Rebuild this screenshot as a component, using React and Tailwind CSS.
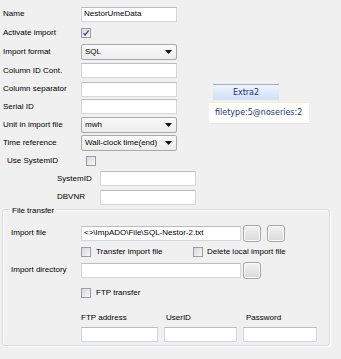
import { useState } from "react";

function TextBox({ value = "", className = "" }) {
  return (
    <div
      className={`h-[15px] bg-white border border-[#d3d7dc] border-t-[#b9bdc3] px-[2px] flex items-center text-[8px] leading-none ${className}`}
    >
      {value}
    </div>
  );
}

function Combo({ value, className = "" }) {
  return (
    <div
      className={`h-[16px] bg-gradient-to-b from-[#fafafa] to-[#ececec] border border-[#a9a9a9] rounded-[2px] pl-[3px] pr-[4px] flex items-center justify-between ${className}`}
    >
      <span>{value}</span>
      <svg width="7" height="4" viewBox="0 0 7 4">
        <path d="M0 0 L7 0 L3.5 4 Z" fill="#111" />
      </svg>
    </div>
  );
}

function Check({ checked }) {
  return (
    <span className="w-[10px] h-[10px] shrink-0 border border-[#9a9da2] bg-gradient-to-br from-[#d6d9de] to-[#f6f7f8] flex items-center justify-center">
      {checked && (
        <svg width="8" height="8" viewBox="0 0 8 8">
          <path d="M1.5 4.2 L3.2 6 L6.6 1.5" stroke="#3a4f86" strokeWidth="1.3" fill="none" />
        </svg>
      )}
    </span>
  );
}

function SmallButton() {
  return (
    <div className="w-[18px] h-[17px] shrink-0 rounded-[3px] border border-[#a5a5a5] bg-gradient-to-b from-[#f3f3f3] to-[#d9d9d9] shadow-[inset_0_0_0_1px_#fbfbfb]" />
  );
}

function Row({ label, h, children, labelClass = "w-[78px]" }) {
  return (
    <div className={`flex items-center ${h}`}>
      <span className={`${labelClass} shrink-0`}>{label}</span>
      {children}
    </div>
  );
}

export default function App() {
  const [name] = useState("NestorUmeData");

  return (
    <div className="w-[341px] h-[359px] bg-[#f0f0f0] overflow-hidden font-['Liberation_Sans',Arial,sans-serif] text-[8px] leading-none text-black">
      <div className="flex">
        <div className="flex flex-col pt-[5px] pl-[3px] w-[206px]">
          <Row label="Name" h="h-[18px]">
            <TextBox value={name} className="w-[96px]" />
          </Row>
          <Row label="Activate import" h="h-[19px]">
            <Check checked />
          </Row>
          <Row label="Import format" h="h-[19px]">
            <Combo value="SQL" className="w-[96px]" />
          </Row>
          <Row label="Column ID Cont." h="h-[19px]">
            <TextBox className="w-[96px]" />
          </Row>
          <Row label="Column separator" h="h-[18px]">
            <TextBox className="w-[96px]" />
          </Row>
          <Row label="Serial ID" h="h-[17px]">
            <TextBox className="w-[96px]" />
          </Row>
          <Row label="Unit in import file" h="h-[19px]">
            <Combo value="mwh" className="w-[96px]" />
          </Row>
          <Row label="Time reference" h="h-[18px]">
            <Combo value="Wall-clock time(end)" className="w-[96px]" />
          </Row>
          <div className="flex items-center h-[17px] pl-[4px]">
            <span className="w-[79px] shrink-0">Use SystemID</span>
            <Check />
          </div>
          <div className="flex items-center h-[19px] pl-[54px]">
            <span className="w-[43px] shrink-0">SystemID</span>
            <TextBox className="w-[96px]" />
          </div>
          <div className="flex items-center h-[18px] pl-[54px]">
            <span className="w-[43px] shrink-0">DBVNR</span>
            <TextBox className="w-[96px]" />
          </div>
        </div>

        <div className="pt-[84px] pl-[3px] font-['DejaVu_Sans',sans-serif] text-[8px]">
          <div className="ml-[4px] w-[66px] h-[16px] border-t border-[#9fb0c6] bg-gradient-to-b from-[#eef4fd] to-[#cfe0f6] flex items-center justify-center text-[#1f2f6e]">
            Extra2
          </div>
          <div className="mt-[2px] w-[100px] h-[22px] bg-white border-t border-[#f5ecd2] border-b border-b-[#e6e6ea] flex items-center pl-[6px] text-[#27346a]">
            filetype:5@noseries:2
          </div>
        </div>
      </div>

      <div className="relative mt-[3px] ml-[2px] w-[328px] border border-[#d5dadf] rounded-[3px] shadow-[inset_1px_1px_0_#ffffff,1px_1px_0_#ffffff] pl-[8px] pt-[14px] pb-[3px]">
        <span className="absolute left-[7px] top-[-3px] bg-[#f0f0f0] px-[2px]">File transfer</span>

        <div className="flex items-center h-[18px]">
          <span className="w-[70px] shrink-0">Import file</span>
          <TextBox value="<>\ImpADO\File\SQL-Nestor-2.txt" className="w-[160px]" />
          <div className="ml-[2px]">
            <SmallButton />
          </div>
          <div className="ml-[6px]">
            <SmallButton />
          </div>
        </div>

        <div className="flex items-center h-[19px] pl-[70px]">
          <div className="flex items-center w-[112px]">
            <Check />
            <span className="ml-[5px]">Transfer import file</span>
          </div>
          <Check />
          <span className="ml-[4px]">Delete local import file</span>
        </div>

        <div className="flex items-center h-[18px]">
          <span className="w-[70px] shrink-0">Import directory</span>
          <TextBox className="w-[160px]" />
          <div className="ml-[2px]">
            <SmallButton />
          </div>
        </div>

        <div className="flex items-center h-[18px] mt-[5px] pl-[70px]">
          <Check />
          <span className="ml-[5px]">FTP transfer</span>
        </div>

        <div className="flex items-center h-[12px] mt-[10px] pl-[70px]">
          <span className="w-[85px]">FTP address</span>
          <span className="w-[80px]">UserID</span>
          <span>Password</span>
        </div>

        <div className="flex mt-[3px] pl-[70px]">
          <TextBox className="w-[77px] border-[#a9c6e3] border-t-[#8fb2d6]" />
          <TextBox className="w-[73px] ml-[6px]" />
          <TextBox className="w-[74px] ml-[6px]" />
        </div>
      </div>
    </div>
  );
}
